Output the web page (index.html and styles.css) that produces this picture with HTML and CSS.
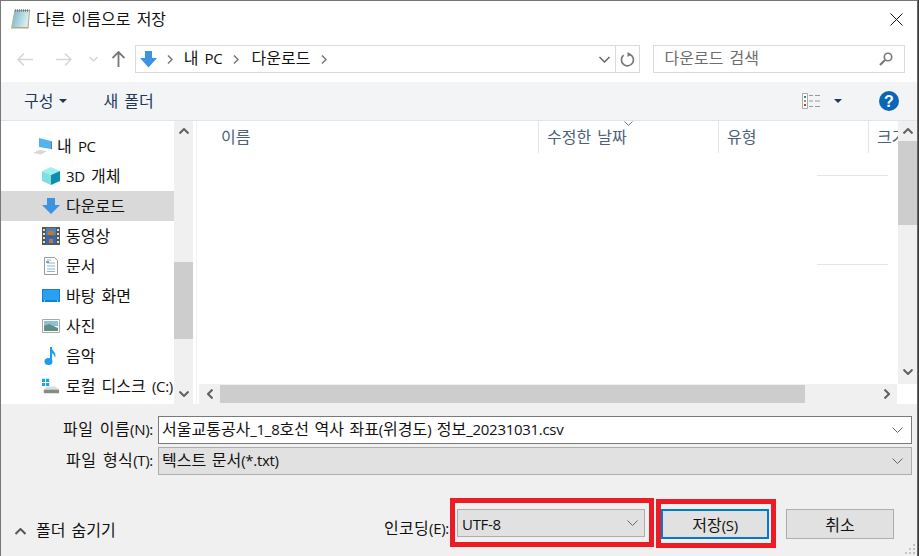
FILE: index.html
```html
<!DOCTYPE html>
<html lang="ko">
<head>
    <meta charset="UTF-8">
    <title>다른 이름으로 저장</title>
    <link rel="stylesheet" href="styles.css">
</head>
<body>
<div class="window">
    <div class="titlebar">
        <svg class="title-icon" width="21" height="21" viewBox="0 0 21 21">
            <defs>
                <linearGradient id="pad" x1="0" y1="0" x2="1" y2="0.3">
                    <stop offset="0" stop-color="#6fb4c9"/>
                    <stop offset="1" stop-color="#d8eef2"/>
                </linearGradient>
            </defs>
            <path d="M4.500 1H20l-1.500 18.500H1z" fill="#b9a77f"/>
            <path d="M4.800 2H19l-1.500 16H2z" fill="url(#pad)"/>
            <path d="M5 1.500h14.500" stroke="#6d7a80" stroke-width="2.500" stroke-dasharray="1 1"/>
        </svg>
        <span class="title-text">다른 이름으로 저장</span>
        <svg class="close-icon" width="13" height="13" viewBox="0 0 13 13"><path d="M.5.500l12 12M12.500.500l-12 12" stroke="#111" fill="none"/></svg>
    </div>

    <div class="navbar">
        <div class="nav-buttons">
            <svg width="16" height="13" viewBox="0 0 16 13"><path d="M1 6.500h15M7 .500l-6 6 6 6" stroke="#d6d6d6" stroke-width="1.500" fill="none"/></svg>
            <svg class="nav-fwd" width="16" height="13" viewBox="0 0 16 13"><path d="M0 6.500h15M9 .500l6 6-6 6" stroke="#d6d6d6" stroke-width="1.500" fill="none"/></svg>
            <svg class="nav-down" width="9" height="6" viewBox="0 0 9 6"><path d="M.5 1l4 4 4-4" stroke="#d6d6d6" stroke-width="1.500" fill="none"/></svg>
            <svg class="nav-up" width="13" height="16" viewBox="0 0 13 16"><path d="M6.500 16V1M.5 7l6-6 6 6" stroke="#777" stroke-width="1.800" fill="none"/></svg>
        </div>
        <div class="address">
            <svg class="addr-icon" width="17" height="17" viewBox="0 0 17 17"><path d="M5 0h7v7h5l-8.500 9.500L0 7h5z" fill="#3b94e3"/></svg>
            <svg class="crumb-sep" width="6" height="9" viewBox="0 0 6 9"><path d="M1 .500l4 4-4 4" stroke="#777" stroke-width="1.500" fill="none"/></svg>
            <span class="crumb">내 <span class="ltn">PC</span></span>
            <svg class="crumb-sep" width="6" height="9" viewBox="0 0 6 9"><path d="M1 .500l4 4-4 4" stroke="#777" stroke-width="1.500" fill="none"/></svg>
            <span class="crumb">다운로드</span>
            <svg class="crumb-sep" width="6" height="9" viewBox="0 0 6 9"><path d="M1 .500l4 4-4 4" stroke="#777" stroke-width="1.500" fill="none"/></svg>
            <svg class="addr-drop" width="11" height="7" viewBox="0 0 11 7"><path d="M.5 1l5 5 5-5" stroke="#666" stroke-width="1.500" fill="none"/></svg>
            <div class="addr-refresh">
                <svg width="15" height="15" viewBox="0 0 15 15"><path d="M9.500 2.200A6 6 0 1 1 3.600 3.200" stroke="#777" stroke-width="1.700" fill="none"/><path d="M7.500 0v5L11.500 2.500z" fill="#777"/></svg>
            </div>
        </div>
        <div class="search">
            <span class="search-text">다운로드 검색</span>
            <svg width="14" height="14" viewBox="0 0 14 14"><circle cx="9" cy="5" r="3.700" stroke="#777" stroke-width="1.600" fill="none"/><path d="M6 8l-5 5" stroke="#777" stroke-width="2.200"/></svg>
        </div>
    </div>

    <div class="toolbar">
        <span class="tool-btn">구성</span>
        <svg class="caret" width="8" height="4" viewBox="0 0 8 4"><path d="M0 0h8L4 4z" fill="#1e395b"/></svg>
        <span class="tool-btn tool-new">새 폴더</span>
        <svg class="view-icon" width="18" height="16" viewBox="0 0 18 16">
            <path d="M.5.500h5v15h-5z" fill="#fff" stroke="#aaa"/>
            <path d="M2 3h2v2H2z" fill="#3a7ca8"/><path d="M2 7h2v2H2z" fill="#9a9a50"/><path d="M2 11h2v2H2z" fill="#c0392b"/>
            <path d="M7 2.500h4M13 2.500h5M7 8h4M13 8h5M7 13.500h4M13 13.500h5" stroke="#999"/>
        </svg>
        <svg class="view-caret" width="8" height="4" viewBox="0 0 8 4"><path d="M0 0h8L4 4z" fill="#1e395b"/></svg>
        <svg class="help-icon" width="20" height="20" viewBox="0 0 20 20">
            <circle cx="10" cy="10" r="10" fill="#0a66b8"/>
            <text x="10" y="15.500" text-anchor="middle" class="help-mark">?</text>
        </svg>
    </div>

    <div class="main">
        <div class="tree">
            <div class="tree-row tree-pc">
                <svg width="20" height="18" viewBox="0 0 20 18"><path d="M6 1l12 3v8L6 10z" fill="#4fb4f0"/><path d="M18 4l1 .5v8l-1-.5z" fill="#777"/><path d="M0 16l6-3 8 1-6 3.500z" fill="#d8d8d8"/></svg>
                <span>내 <span class="ltn">PC</span></span>
            </div>
            <div class="tree-row">
                <svg width="18" height="18" viewBox="0 0 18 18"><path d="M9 0l9 4-9 4-9-4z" fill="#9df0f0"/><path d="M0 4l9 4v10l-9-4z" fill="#7fe0e0"/><path d="M18 4l-9 4v10l9-4z" fill="#0f8fb0"/></svg>
                <span><span class="ltn">3D</span> 개체</span>
            </div>
            <div class="tree-row tree-active">
                <svg width="18" height="16" viewBox="0 0 18 16"><path d="M5 0h8v7h5l-9 9-9-9h5z" fill="#3b94e3"/></svg>
                <span>다운로드</span>
            </div>
            <div class="tree-row">
                <svg width="18" height="18" viewBox="0 0 18 18"><path d="M0 0h18v18H0z" fill="#555"/><path d="M4 1h10v7.500H4z" fill="#4a7fc0"/><path d="M4 9.500h10V17H4z" fill="#2f6bb5"/><path d="M6 4h6v4H6zM7 12h4v4H7z" fill="#c8752a"/><path d="M1 2h2v2H1zM1 6h2v2H1zM1 10h2v2H1zM1 14h2v2H1zM15 2h2v2h-2zM15 6h2v2h-2zM15 10h2v2h-2zM15 14h2v2h-2z" fill="#ddd"/></svg>
                <span>동영상</span>
            </div>
            <div class="tree-row">
                <svg width="18" height="18" viewBox="0 0 18 18"><path d="M2.500.500h10l3 3v14h-13z" fill="#fff" stroke="#999"/><path d="M5 3h4M5 6h8M5 9h8M5 12h8M5 14.500h8" stroke="#8fb3d0"/><path d="M4 5h3" stroke="#2f8fd8" stroke-width="1.500"/></svg>
                <span>문서</span>
            </div>
            <div class="tree-row">
                <svg width="18" height="14" viewBox="0 0 18 14"><path d="M0 0h18v13H0z" fill="#0d83d8"/><path d="M1 1h16v10H1z" fill="#2aa0ee"/><path d="M2 12h1M15 12h1" stroke="#fff"/></svg>
                <span>바탕 화면</span>
            </div>
            <div class="tree-row">
                <svg width="18" height="14" viewBox="0 0 18 14"><path d="M.5.500h17v13H.5z" fill="#fff" stroke="#aaa"/><path d="M2 2h14v5H2z" fill="#8fbfe0"/><path d="M2 7l5-2 9 4v3H2z" fill="#5f8f7f"/></svg>
                <span>사진</span>
            </div>
            <div class="tree-row">
                <svg width="18" height="20" viewBox="0 0 18 20"><path d="M9 1v15" stroke="#1c9bf0" stroke-width="2"/><path d="M9 1c1 4 6 5 4 11-.5-3-2-5-4-5z" fill="#1c9bf0"/><ellipse cx="6.500" cy="15.500" rx="4" ry="3.500" fill="#1c9bf0"/></svg>
                <span>음악</span>
            </div>
            <div class="tree-row">
                <svg width="20" height="17" viewBox="0 0 20 17"><path d="M0 0h3.500v3.500H0zM4.500 0H8v3.500H4.500zM0 4.500h3.500V8H0zM4.500 4.500H8V8H4.500z" fill="#19a3e8"/><path d="M2 12l4-3.500h9l4 3.500z" fill="#dcdcdc"/><path d="M2 12h17v4H2z" fill="#8a8a8a"/><path d="M9 13h4v1.500H9z" fill="#3fb34f"/></svg>
                <span>로컬 디스크 <span class="ltn">(C:)</span></span>
            </div>
        </div>
        <div class="scroll-v tree-scroll">
            <svg class="arrow" width="10" height="6" viewBox="0 0 10 6"><path d="M.5 5.500l4.500-4.500 4.500 4.500" stroke="#606060" stroke-width="2" fill="none"/></svg>
            <div class="tree-gap"></div>
            <div class="thumb tree-thumb"></div>
            <div class="scroll-fill"></div>
            <svg class="arrow" width="10" height="6" viewBox="0 0 10 6"><path d="M.5.500L5 5l4.500-4.500" stroke="#606060" stroke-width="2" fill="none"/></svg>
        </div>
        <div class="list">
            <div class="list-top">
                <div class="list-area">
                    <div class="columns">
                        <div class="col col-name">이름</div>
                        <div class="col col-date">수정한 날짜
                            <svg class="sort-icon" width="9" height="5" viewBox="0 0 9 5"><path d="M.5.500l4 4 4-4" stroke="#777" fill="none"/></svg>
                        </div>
                        <div class="col col-type">유형</div>
                        <div class="col col-size">크기</div>
                    </div>
                    <div class="faint-line first"></div>
                    <div class="faint-line second"></div>
                </div>
                <div class="scroll-v list-scroll">
                    <svg class="arrow" width="10" height="6" viewBox="0 0 10 6"><path d="M.5 5.500l4.500-4.500 4.500 4.500" stroke="#606060" stroke-width="2" fill="none"/></svg>
                    <div class="thumb list-thumb"></div>
                    <div class="scroll-fill"></div>
                    <svg class="arrow" width="10" height="6" viewBox="0 0 10 6"><path d="M.5.500L5 5l4.500-4.500" stroke="#606060" stroke-width="2" fill="none"/></svg>
                </div>
            </div>
            <div class="scroll-h">
                <div class="h-arrow"><svg width="6" height="10" viewBox="0 0 6 10"><path d="M5.500.500L1 5l4.500 4.500" stroke="#606060" stroke-width="2" fill="none"/></svg></div>
                <div class="thumb h-thumb"></div>
                <div class="scroll-fill"></div>
                <div class="h-arrow"><svg width="6" height="10" viewBox="0 0 6 10"><path d="M.5.500L5 5 .5 9.500" stroke="#606060" stroke-width="2" fill="none"/></svg></div>
                <div class="corner"></div>
            </div>
        </div>
    </div>

    <div class="bottom">
        <div class="field-row">
            <span class="field-label">파일 이름<span class="ltn">(N):</span></span>
            <div class="field field-input">
                <span class="field-text">서울교통공사<span class="ltn">_1_8</span>호선 역사 좌표<span class="ltn">(</span>위경도<span class="ltn">)</span> 정보<span class="ltn">_20231031.csv</span></span>
                <svg width="11" height="6" viewBox="0 0 11 6"><path d="M.5.500l5 5 5-5" stroke="#666" fill="none"/></svg>
            </div>
        </div>
        <div class="field-row">
            <span class="field-label">파일 형식<span class="ltn">(T):</span></span>
            <div class="field field-select">
                <span class="field-text">텍스트 문서<span class="ltn">(*.txt)</span></span>
                <svg width="11" height="6" viewBox="0 0 11 6"><path d="M.5.500l5 5 5-5" stroke="#666" fill="none"/></svg>
            </div>
        </div>
        <div class="actions">
            <div class="hide-folders">
                <svg width="11" height="7" viewBox="0 0 11 7"><path d="M.5 6L5.500 1l5 5" stroke="#555" stroke-width="2" fill="none"/></svg>
                <span class="hide-text">폴더 숨기기</span>
            </div>
            <span class="enc-label">인코딩<span class="ltn">(E):</span></span>
            <div class="red-box enc-box">
                <div class="field-select enc-select">
                    <span class="ltn btn-text">UTF-8</span>
                    <svg width="11" height="6" viewBox="0 0 11 6"><path d="M.5.500l5 5 5-5" stroke="#666" fill="none"/></svg>
                </div>
            </div>
            <div class="red-box save-box">
                <div class="btn btn-save"><span class="btn-text">저장<span class="ltn">(S)</span></span></div>
            </div>
            <div class="btn btn-cancel"><span class="btn-text">취소</span></div>
        </div>
        <svg class="grip" width="11" height="11" viewBox="0 0 11 11"><path d="M8 0h2v2H8zM4 4h2v2H4zM8 4h2v2H8zM0 8h2v2H0zM4 8h2v2H4zM8 8h2v2H8z" fill="#c4c4c4"/></svg>
    </div>
</div>
</body>
</html>
```

FILE: styles.css
```css
* {
    box-sizing: border-box;
}
html, body {
    margin: 0;
    height: 100%;
    overflow: hidden;
    background: #3a3a3a;
}
.window {
    width: 918px;
    height: 556px;
    border-top: 1px solid #777;
    border-left: 1px solid #777;
    border-right: 1px solid #666;
    background: #fff;
    display: flex;
    flex-direction: column;
    font-family: "Open Sans", "Noto Sans CJK KR", sans-serif;
    font-size: 16px;
    line-height: 20px;
    word-spacing: 2px;
    color: #111;
}
.ltn {
    font-size: 15px;
    letter-spacing: -0.3px;
}
svg {
    flex: none;
    display: block;
}

/* title */
.titlebar {
    height: 39px;
    flex: none;
    display: flex;
    align-items: center;
    padding: 0 14px 3px 9px;
}
.title-text {
    margin-left: 5px;
}
.close-icon {
    margin-left: auto;
}

/* back/forward + address */
.navbar {
    height: 42px;
    flex: none;
    display: flex;
    align-items: center;
    padding: 5px 12px 9px 16px;
}
.nav-buttons {
    width: 118px;
    display: flex;
    align-items: center;
}
.nav-fwd {
    margin-left: 23px;
}
.nav-down {
    margin-left: 17px;
}
.nav-up {
    margin-left: 14px;
}
.address {
    width: 506px;
    height: 28px;
    border: 1px solid #d9d9d9;
    display: flex;
    align-items: center;
    padding-left: 4px;
}
.crumb {
    margin-top: -2px;
}
.crumb-sep {
    margin: 0 12px 0 11px;
}
.addr-icon + .crumb-sep {
    margin: 0 11px 0 10px;
}
.addr-drop {
    margin-left: auto;
    margin-right: 5px;
}
.addr-refresh {
    width: 24px;
    height: 100%;
    border-left: 1px solid #d9d9d9;
    display: flex;
    align-items: center;
    justify-content: center;
}
.search {
    width: 253px;
    height: 28px;
    margin-left: 13px;
    border: 1px solid #d9d9d9;
    display: flex;
    align-items: center;
    justify-content: space-between;
    padding: 0 11px;
    color: #6d6d6d;
}
.search-text {
    margin-top: -2px;
}

/* toolbar */
.toolbar {
    height: 39px;
    flex: none;
    display: flex;
    align-items: center;
    background: #f3f4f6;
    border-bottom: 1px solid #e4e4e4;
    padding-left: 23px;
    color: #1e395b;
}
.caret {
    margin-left: 6px;
}
.tool-new {
    margin-left: 36px;
}
.view-icon {
    margin-left: auto;
}
.view-caret {
    margin-left: 14px;
}
.help-icon {
    margin-left: 37px;
    margin-right: 18px;
}
.help-mark {
    font-family: "Liberation Sans", sans-serif;
    font-size: 16px;
    font-weight: bold;
    fill: #fff;
}

/* tree + file list */
.main {
    height: 283px;
    flex: none;
    display: flex;
}
.tree {
    width: 173px;
    flex: none;
    padding-top: 10px;
    overflow: hidden;
    white-space: nowrap;
}
.tree-row {
    height: 30px;
    display: flex;
    align-items: center;
    padding-left: 41px;
}
.tree-row svg {
    width: 18px;
    margin-right: 6px;
}
.tree-pc {
    padding-left: 32px;
}
.tree-pc svg {
    width: 20px;
    margin-right: 4px;
}
.tree-active {
    background: #d9d9d9;
}
.scroll-v {
    background: #f0f0f0;
    display: flex;
    flex-direction: column;
    align-items: center;
}
.scroll-v .arrow {
    margin: 7px 0;
}
.tree-scroll {
    width: 19px;
    flex: none;
}
.tree-gap {
    height: 121px;
}
.scroll-fill {
    flex: 1;
}
.thumb {
    background: #cdcdcd;
}
.tree-thumb {
    width: 100%;
    height: 77px;
}
.list {
    flex: 1;
    min-width: 0;
    display: flex;
    flex-direction: column;
    margin-left: 3px;
    border-left: 1px solid #f1f1f1;
    padding-left: 2px;
}
.list-top {
    flex: 1;
    display: flex;
    min-height: 0;
}
.list-area {
    flex: 1;
    min-width: 0;
    position: relative;
    overflow: hidden;
}
.columns {
    height: 32px;
    display: flex;
    color: #4c607a;
}
.col {
    position: relative;
    flex: none;
    padding: 6px 0 0 8px;
    border-right: 1px solid #e5e5e5;
    white-space: nowrap;
}
.col-name {
    width: 340px;
    padding-left: 22px;
}
.col-date {
    width: 180px;
}
.col-type {
    width: 150px;
}
.col-size {
    border-right: none;
}
.sort-icon {
    position: absolute;
    left: 85px;
    top: 0;
}
.faint-line {
    position: absolute;
    left: 618px;
    width: 71px;
    height: 1px;
    background: #e5e5e5;
}
.faint-line.first {
    top: 54px;
}
.faint-line.second {
    top: 143px;
}
.list-scroll {
    width: 19px;
    flex: none;
}
.list-scroll .arrow:last-child {
    margin-bottom: 9px;
}
.list-thumb {
    width: 100%;
    height: 84px;
}
.scroll-h {
    height: 20px;
    flex: none;
    display: flex;
    align-items: center;
    background: #f0f0f0;
}
.h-arrow {
    width: 21px;
    height: 100%;
    display: flex;
    align-items: center;
    justify-content: center;
}
.h-thumb {
    width: 585px;
    height: 18px;
}
.corner {
    width: 20px;
    height: 100%;
    background: #fff;
}

/* file name + buttons */
.bottom {
    flex: 1;
    background: #f0f0f0;
    padding-top: 12px;
    position: relative;
}
.grip {
    position: absolute;
    right: 1px;
    bottom: 1px;
}
.field-row {
    height: 28px;
    margin-bottom: 3px;
    display: flex;
    align-items: center;
}
.field-label {
    width: 157px;
    padding-right: 5px;
    margin-top: -2px;
    text-align: right;
    letter-spacing: 0.4px;
}
.field-text {
    margin-top: -2px;
    word-spacing: 1.400px;
}
.field {
    width: 754px;
    height: 100%;
    display: flex;
    align-items: center;
    justify-content: space-between;
    padding: 0 8px 0 3px;
    border: 1px solid #7a7a7a;
}
.field-input {
    background: #fff;
}
.field-select {
    background: #e1e1e1;
    border-color: #adadad;
}
.actions {
    height: 49px;
    margin-top: 23px;
    display: flex;
    align-items: flex-start;
    padding-left: 14px;
}
.hide-folders {
    width: 369px;
    display: flex;
    align-items: center;
    margin-top: 24px;
}
.hide-folders svg {
    margin-right: 10px;
}
.hide-text {
    margin-top: -2px;
}
.enc-label {
    margin-top: 20px;
    width: 66px;
    letter-spacing: 0.3px;
}
.btn-text {
    margin-top: 2px;
}
.red-box {
    border: 5px solid #ed1c24;
    display: flex;
    align-items: center;
    height: 49px;
}
.enc-box {
    width: 204px;
    padding-left: 2px;
}
.enc-select {
    width: 188px;
    height: 28px;
    display: flex;
    align-items: center;
    justify-content: space-between;
    padding: 0 6px 0 4px;
    border: 1px solid #adadad;
}
.save-box {
    width: 120px;
    margin-left: 2px;
    margin-top: 1px;
}
.btn {
    width: 108px;
    height: 30px;
    background: #e1e1e1;
    display: flex;
    align-items: center;
    justify-content: center;
    border: 1px solid #adadad;
}
.btn-save {
    border: 2px solid #0078d7;
}
.btn-cancel {
    margin-left: 10px;
    margin-top: 11px;
}
```
